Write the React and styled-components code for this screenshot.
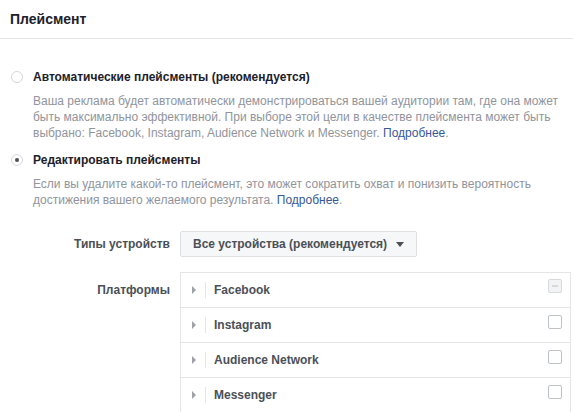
import React from "react";
import styled, { createGlobalStyle } from "styled-components";

const GlobalStyle = createGlobalStyle`
  body {
    margin: 0;
    background: #fff;
    font-family: "Liberation Sans", Arial, sans-serif;
    font-size: 12px;
    color: #1d2129;
  }
`;

const Page = styled.div`
  width: 573px;
  height: 413px;
  overflow: hidden;
`;

const Header = styled.div`
  height: 38px;
  line-height: 38px;
  padding-left: 10px;
  border-bottom: 1px solid #e5e5e5;
  font-size: 14px;
  font-weight: bold;
  color: #1d2129;
`;

const Body = styled.div`
  padding: 30px 0 0 11px;
`;

const Option = styled.div`
  display: flex;
  align-items: center;
  gap: 10px;
  line-height: 16px;
  margin-top: ${({ $first }) => ($first ? "0" : "11px")};
  font-weight: bold;
  color: #1d2129;
`;

const Radio = styled.span`
  position: relative;
  width: 12px;
  height: 12px;
  box-sizing: border-box;
  border: 1px solid #d3d6db;
  border-radius: 50%;
  background: #fff;

  &::after {
    content: "";
    display: ${({ $checked }) => ($checked ? "block" : "none")};
    position: absolute;
    left: 3px;
    top: 3px;
    width: 4px;
    height: 4px;
    border-radius: 50%;
    background: #4b4f56;
  }
`;

const Desc = styled.p`
  margin: 8px 0 0 22px;
  width: 535px;
  line-height: 16px;
  color: #90949c;
`;

const Link = styled.a`
  color: #365899;
  text-decoration: none;
`;

const FieldRow = styled.div`
  display: grid;
  grid-template-columns: 170px auto;
  column-gap: 10px;
  align-items: ${({ $top }) => ($top ? "start" : "center")};
  margin-top: ${({ $gap }) => $gap}px;
`;

const FieldLabel = styled.div`
  text-align: right;
  font-weight: bold;
  color: #4b4f56;
  line-height: 16px;
  padding-top: ${({ $top }) => ($top ? "10px" : "0")};
`;

const Dropdown = styled.button`
  justify-self: start;
  display: flex;
  align-items: center;
  gap: 9px;
  height: 26px;
  padding: 0 12px 0 12px;
  box-sizing: border-box;
  white-space: nowrap;
  border: 1px solid #dddfe2;
  border-radius: 2px;
  background: #f6f7f9;
  font-family: inherit;
  font-size: 12px;
  font-weight: bold;
  color: #4b4f56;
`;

const DownArrow = styled.span`
  width: 0;
  height: 0;
  border-left: 4px solid transparent;
  border-right: 4px solid transparent;
  border-top: 5px solid #4b4f56;
`;

const PlatformBox = styled.div`
  width: 391px;
  box-sizing: border-box;
  border: 1px solid #e5e5e5;
  border-bottom: none;
`;

const PlatformRow = styled.div`
  display: flex;
  align-items: center;
  height: 34px;
  border-top: ${({ $first }) => ($first ? "none" : "1px solid #e5e5e5")};
  padding: 0 8px 0 11px;
`;

const Caret = styled.span`
  width: 0;
  height: 0;
  border-top: 4px solid transparent;
  border-bottom: 4px solid transparent;
  border-left: 4px solid #9da1a8;
`;

const Sep = styled.span`
  width: 1px;
  height: 16px;
  background: #e5e5e5;
  margin: 0 8px 0 9px;
`;

const PlatformName = styled.span`
  flex: 1;
  font-weight: bold;
  color: #4b4f56;
`;

const Check = styled.span`
  position: relative;
  width: 14px;
  height: 14px;
  box-sizing: border-box;
  border: 1px solid ${({ $disabled }) => ($disabled ? "#d6d9dd" : "#bec3c9")};
  border-radius: 2px;
  background: ${({ $disabled }) => ($disabled ? "#f2f3f5" : "#fff")};
  margin-top: ${({ $disabled }) => ($disabled ? "-8px" : "-6px")};

  &::after {
    content: "";
    display: ${({ $disabled }) => ($disabled ? "block" : "none")};
    position: absolute;
    left: 3px;
    top: 5px;
    width: 6px;
    height: 2px;
    background: #d6d9dd;
  }
`;

const platforms = [
  { name: "Facebook", disabled: true },
  { name: "Instagram" },
  { name: "Audience Network" },
  { name: "Messenger" },
];

export default function App() {
  return (
    <Page>
      <GlobalStyle />
      <Header>Плейсмент</Header>
      <Body>
        <Option $first>
          <Radio />
          Автоматические плейсменты (рекомендуется)
        </Option>
        <Desc>
          Ваша реклама будет автоматически демонстрироваться вашей аудитории
          там, где она может быть максимально эффективной. При выборе этой цели
          в качестве плейсмента может быть выбрано: Facebook, Instagram,
          Audience Network и Messenger. <Link href="#">Подробнее</Link>.
        </Desc>

        <Option>
          <Radio $checked />
          Редактировать плейсменты
        </Option>
        <Desc>
          Если вы удалите какой-то плейсмент, это может сократить охват и
          понизить вероятность достижения вашего желаемого результата.{" "}
          <Link href="#">Подробнее</Link>.
        </Desc>
      </Body>

      <FieldRow $gap={23}>
        <FieldLabel>Типы устройств</FieldLabel>
        <Dropdown>
          Все устройства (рекомендуется)
          <DownArrow />
        </Dropdown>
      </FieldRow>

      <FieldRow $gap={15} $top>
        <FieldLabel $top>Платформы</FieldLabel>
        <PlatformBox>
          {platforms.map((p, i) => (
            <PlatformRow key={p.name} $first={i === 0}>
              <Caret />
              <Sep />
              <PlatformName>{p.name}</PlatformName>
              <Check $disabled={p.disabled} />
            </PlatformRow>
          ))}
        </PlatformBox>
      </FieldRow>
    </Page>
  );
}
